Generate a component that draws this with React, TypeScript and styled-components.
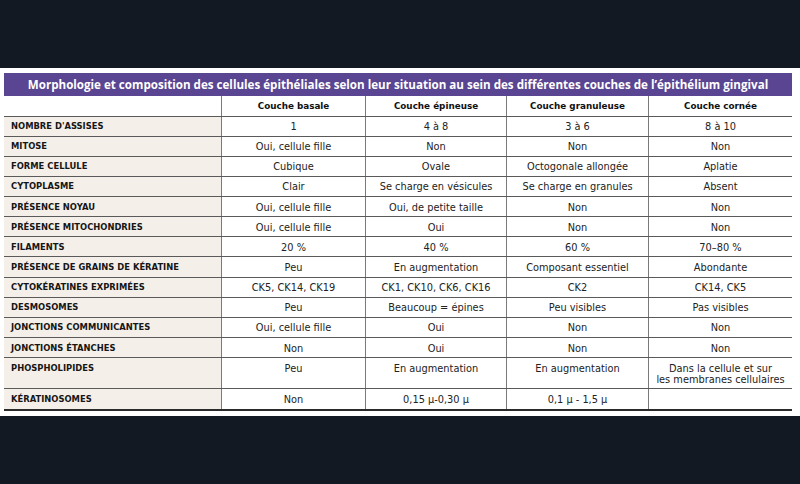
import React from "react";
import styled, { createGlobalStyle } from "styled-components";

const Global = createGlobalStyle`
  html, body { margin: 0; padding: 0; background: #121922; }
  body { width: 800px; height: 484px; overflow: hidden; font-family: "DejaVu Sans", "Open Sans", sans-serif; }
`;

const Page = styled.div`
  display: flex;
  flex-direction: column;
  width: 800px;
  height: 484px;
  background: #121922;
`;

const TopBand = styled.div`
  height: 68px;
  flex: none;
`;

const Sheet = styled.div`
  flex: none;
  height: 348px;
  background: #ffffff;
  padding: 5px 8px 0 4px;
  box-sizing: border-box;
  overflow: hidden;
`;

const Table = styled.div`
  width: 788px;
  display: flex;
  flex-direction: column;
  border-bottom: 2px solid #2a2a2a;
`;

const TitleBar = styled.div`
  height: 23px;
  background: #5a4592;
  color: #ffffff;
  font-family: "Open Sans", "DejaVu Sans", sans-serif;
  font-weight: 700;
  font-size: 11.6px;
  display: flex;
  align-items: center;
  justify-content: center;
  white-space: nowrap;
`;

const COLS = "218px 144px 141px 142px 143px";

const Row = styled.div<{ $h: number }>`
  display: grid;
  grid-template-columns: ${COLS};
  height: ${(p) => p.$h}px;
  box-sizing: border-box;
  border-bottom: 1px solid #5a5a5a;
  &:last-child { border-bottom: none; }
`;

const Cell = styled.div<{ $top?: boolean }>`
  border-right: 1px solid #7a7a7a;
  &:last-child { border-right: none; }
  display: flex;
  flex-direction: column;
  align-items: center;
  justify-content: ${(p) => (p.$top ? "flex-start" : "center")};
  padding-top: ${(p) => (p.$top ? "5px" : "1px")};
  box-sizing: border-box;
  text-align: center;
  font-size: 9.8px;
  line-height: 11px;
  color: #222222;
  white-space: nowrap;
`;

const HeadCell = styled(Cell)`
  font-weight: 700;
  font-size: 8.8px;
  color: #111111;
`;

const LabelCell = styled.div<{ $blank?: boolean; $top?: boolean }>`
  background: ${(p) => (p.$blank ? "#ffffff" : "#f5efe9")};
  border-right: 1px solid #7a7a7a;
  display: flex;
  align-items: ${(p) => (p.$top ? "flex-start" : "center")};
  padding-left: 7px;
  padding-top: ${(p) => (p.$top ? "5px" : "1px")};
  box-sizing: border-box;
  font-weight: 700;
  font-size: 8.4px;
  line-height: 11px;
  color: #161616;
  white-space: nowrap;
`;

const Bottom = styled.div`
  flex: 1;
`;

type R = { label: string; cells: string[][]; tall?: boolean };

const rows: R[] = [
  { label: "NOMBRE D'ASSISES", cells: [["1"], ["4 à 8"], ["3 à 6"], ["8 à 10"]] },
  { label: "MITOSE", cells: [["Oui, cellule fille"], ["Non"], ["Non"], ["Non"]] },
  { label: "FORME CELLULE", cells: [["Cubique"], ["Ovale"], ["Octogonale allongée"], ["Aplatie"]] },
  { label: "CYTOPLASME", cells: [["Clair"], ["Se charge en vésicules"], ["Se charge en granules"], ["Absent"]] },
  { label: "PRÉSENCE NOYAU", cells: [["Oui, cellule fille"], ["Oui, de petite taille"], ["Non"], ["Non"]] },
  { label: "PRÉSENCE MITOCHONDRIES", cells: [["Oui, cellule fille"], ["Oui"], ["Non"], ["Non"]] },
  { label: "FILAMENTS", cells: [["20 %"], ["40 %"], ["60 %"], ["70–80 %"]] },
  { label: "PRÉSENCE DE GRAINS DE KÉRATINE", cells: [["Peu"], ["En augmentation"], ["Composant essentiel"], ["Abondante"]] },
  { label: "CYTOKÉRATINES EXPRIMÉES", cells: [["CK5, CK14, CK19"], ["CK1, CK10, CK6, CK16"], ["CK2"], ["CK14, CK5"]] },
  { label: "DESMOSOMES", cells: [["Peu"], ["Beaucoup = épines"], ["Peu visibles"], ["Pas visibles"]] },
  { label: "JONCTIONS COMMUNICANTES", cells: [["Oui, cellule fille"], ["Oui"], ["Non"], ["Non"]] },
  { label: "JONCTIONS ÉTANCHES", cells: [["Non"], ["Oui"], ["Non"], ["Non"]] },
  {
    label: "PHOSPHOLIPIDES",
    tall: true,
    cells: [["Peu"], ["En augmentation"], ["En augmentation"], ["Dans la cellule et sur", "les membranes cellulaires"]],
  },
  { label: "KÉRATINOSOMES", cells: [["Non"], ["0,15 µ-0,30 µ"], ["0,1 µ - 1,5 µ"], [""]] },
];

const heads = ["Couche basale", "Couche épineuse", "Couche granuleuse", "Couche cornée"];

export default function App() {
  return (
    <Page>
      <Global />
      <TopBand />
      <Sheet>
        <Table>
          <TitleBar>
            Morphologie et composition des cellules épithéliales selon leur situation au sein des différentes couches de l’épithélium gingival
          </TitleBar>
          <Row $h={20.5}>
            <LabelCell $blank />
            {heads.map((h) => (
              <HeadCell key={h}>{h}</HeadCell>
            ))}
          </Row>
          {rows.map((r) => (
            <Row key={r.label} $h={r.tall ? 31 : 20.15}>
              <LabelCell $top={r.tall}>{r.label}</LabelCell>
              {r.cells.map((c, i) => (
                <Cell key={i} $top={r.tall}>
                  {c.map((line, j) => (
                    <span key={j}>{line}</span>
                  ))}
                </Cell>
              ))}
            </Row>
          ))}
        </Table>
      </Sheet>
      <Bottom />
    </Page>
  );
}
